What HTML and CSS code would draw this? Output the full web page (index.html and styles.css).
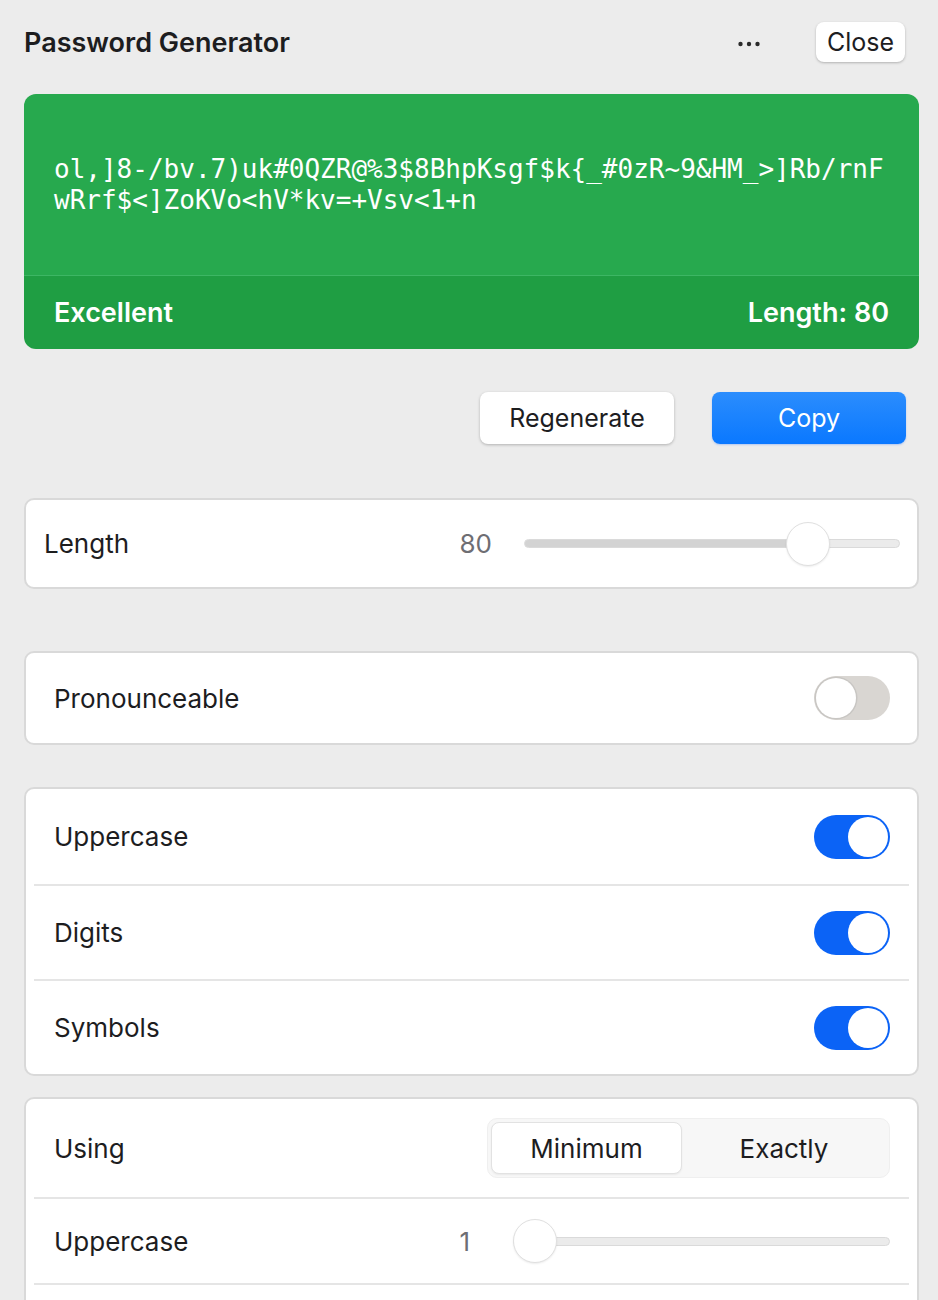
FILE: index.html
```html
<!DOCTYPE html>
<html lang="en">
<head>
<meta charset="utf-8">
<title>Password Generator</title>
<link rel="stylesheet" href="styles.css">
</head>
<body>
<div class="page">
  <header class="topbar">
    <h1 class="title">Password Generator</h1>
    <button class="more" aria-label="More options">
      <svg width="22" height="6" viewBox="0 0 22 6"><circle cx="2.5" cy="3" r="2.2"/><circle cx="11" cy="3" r="2.2"/><circle cx="19.5" cy="3" r="2.2"/></svg>
    </button>
    <button class="btn-close">Close</button>
  </header>

  <section class="result">
    <div class="result-pass">
      <p class="pw">ol,]8-/bv.7)uk#0QZR@%3$8BhpKsgf$k{_#0zR~9&amp;HM_&gt;]Rb/rnFwRrf$&lt;]ZoKVo&lt;hV*kv=+Vsv&lt;1+n</p>
    </div>
    <div class="result-foot">
      <span>Excellent</span>
      <span>Length: 80</span>
    </div>
  </section>

  <div class="actions">
    <button class="btn btn-light">Regenerate</button>
    <button class="btn btn-primary">Copy</button>
  </div>

  <div class="card card-length">
    <span class="label grow">Length</span>
    <span class="value">80</span>
    <div class="slider slider-length" style="--p: 0.79">
      <div class="track"><div class="fill"></div></div>
      <div class="thumb"></div>
    </div>
  </div>

  <div class="card card-single">
    <span class="label grow">Pronounceable</span>
    <span class="toggle"></span>
  </div>

  <div class="card card-list">
    <div class="row">
      <span class="label grow">Uppercase</span>
      <span class="toggle on"></span>
    </div>
    <div class="row">
      <span class="label grow">Digits</span>
      <span class="toggle on"></span>
    </div>
    <div class="row">
      <span class="label grow">Symbols</span>
      <span class="toggle on"></span>
    </div>
  </div>

  <div class="card card-list card-using">
    <div class="row row-using">
      <span class="label grow">Using</span>
      <div class="segmented">
        <span class="seg seg-active">Minimum</span>
        <span class="seg">Exactly</span>
      </div>
    </div>
    <div class="row row-slider">
      <span class="label grow">Uppercase</span>
      <span class="value">1</span>
      <div class="slider slider-count" style="--p: 0">
        <div class="track"><div class="fill"></div></div>
        <div class="thumb"></div>
      </div>
    </div>
    <div class="row row-slider">
      <span class="label grow">Digits</span>
      <span class="value">1</span>
      <div class="slider slider-count" style="--p: 0">
        <div class="track"><div class="fill"></div></div>
        <div class="thumb"></div>
      </div>
    </div>
    <div class="row row-slider">
      <span class="label grow">Symbols</span>
      <span class="value">1</span>
      <div class="slider slider-count" style="--p: 0">
        <div class="track"><div class="fill"></div></div>
        <div class="thumb"></div>
      </div>
    </div>
  </div>
</div>
</body>
</html>
```

FILE: styles.css
```css
* { box-sizing: border-box; }

body {
  margin: 0;
  background: #ececec;
  font-family: Inter, "Noto Sans", sans-serif;
  color: #1d1d1f;
}

button { font-family: inherit; cursor: pointer; }

.page {
  padding: 22px 19px 40px 24px;
}

/* Header */
.topbar {
  display: flex;
  align-items: center;
  height: 40px;
  padding-right: 14px;
}

.title {
  flex: 1;
  margin: 0;
  font-size: 27px;
  font-weight: 600;
  letter-spacing: 0;
  color: #1d1d1f;
}

.more {
  display: flex;
  align-items: center;
  padding: 0;
  margin: 4px 56px 0 0;
  border: 0;
  background: none;
  fill: #2a2a2a;
}

.btn-close {
  width: 89px;
  height: 40px;
  padding: 0;
  border: 0;
  border-radius: 8px;
  background: #fff;
  box-shadow: 0 1px 2.5px rgba(0, 0, 0, 0.25);
  font-size: 25px;
  color: #1d1d1f;
}

/* Generated password */
.result {
  margin-top: 32px;
  border-radius: 12px;
  overflow: hidden;
  color: #fff;
}

.result-pass {
  display: flex;
  align-items: center;
  height: 182px;
  padding: 0 30px;
  background: #27a94e;
  border-bottom: 1px solid #3db664;
}

.pw {
  margin: 0;
  font-family: "DejaVu Sans Mono", "Liberation Mono", monospace;
  font-size: 26px;
  line-height: 31px;
  word-break: break-all;
}

.result-foot {
  display: flex;
  align-items: center;
  justify-content: space-between;
  height: 73px;
  padding: 0 30px;
  background: #1f9e43;
  font-size: 27px;
  font-weight: 600;
}

/* Actions */
.actions {
  display: flex;
  justify-content: flex-end;
  gap: 38px;
  margin-top: 43px;
  padding-right: 13px;
}

.btn {
  width: 194px;
  height: 52px;
  border: 0;
  border-radius: 8px;
  font-size: 25px;
}

.btn-light {
  background: #fff;
  color: #1d1d1f;
  box-shadow: 0 1px 3px rgba(0, 0, 0, 0.25);
}

.btn-primary {
  background: linear-gradient(#2b8dfd, #0a78ff);
  color: #fff;
  box-shadow: 0 1px 2px rgba(0, 90, 255, 0.25);
}

/* Cards */
.card {
  background: #fff;
  border: 2px solid #d9d9d9;
  border-radius: 10px;
}

.label {
  font-size: 26px;
  color: #1d1d1f;
}

.grow { flex: 1; }

.value {
  font-size: 26px;
  color: #6e6e73;
}

.card-length {
  display: flex;
  align-items: center;
  height: 91px;
  margin-top: 54px;
  padding: 0 17px 0 18px;
}

.card-single {
  display: flex;
  align-items: center;
  height: 94px;
  margin-top: 62px;
  padding: 0 27px 0 28px;
}

.card-list {
  margin-top: 42px;
  padding: 0 8px;
}

.card-using {
  margin-top: 21px;
}

.row {
  display: flex;
  align-items: center;
  height: 95px;
  padding: 0 19px 0 20px;
}

.row + .row {
  border-top: 2px solid #e5e5e5;
}

.row-using { height: 98px; }
.row-slider { height: 86px; }

/* Slider */
.slider {
  position: relative;
  height: 44px;
  display: flex;
  align-items: center;
}

.slider-length {
  width: 376px;
  margin-left: 32px;
}

.slider-count {
  width: 377px;
  margin-left: 43px;
}

.track {
  width: 100%;
  height: 9px;
  border-radius: 5px;
  background: #ebebeb;
  border: 1px solid #dadada;
  overflow: hidden;
}

.fill {
  height: 100%;
  width: calc((100% - 44px) * var(--p) + 22px);
  background: #d3d3d3;
}

.thumb {
  position: absolute;
  top: 0;
  left: calc((100% - 44px) * var(--p));
  width: 44px;
  height: 44px;
  border-radius: 50%;
  background: #fff;
  border: 1px solid #e0e0e0;
  box-shadow: 0 1px 2px rgba(0, 0, 0, 0.08);
}

/* Toggle */
.toggle {
  position: relative;
  display: block;
  width: 76px;
  height: 44px;
  border-radius: 22px;
  background: #d9d6d2;
}

.toggle::after {
  content: "";
  position: absolute;
  top: 2px;
  left: 2px;
  width: 40px;
  height: 40px;
  border-radius: 50%;
  background: #fff;
  box-shadow: 0 0 0 1.5px #c8c6c3;
}

.toggle.on {
  background: #0b63f6;
}

.toggle.on::after {
  left: 34px;
  box-shadow: none;
}

/* Segmented control */
.segmented {
  display: flex;
  width: 403px;
  height: 60px;
  padding: 3px;
  border-radius: 10px;
  background: #f7f7f7;
  border: 1px solid #efefef;
}

.seg {
  flex: 1;
  display: flex;
  align-items: center;
  justify-content: center;
  font-size: 26px;
  color: #1d1d1f;
  border-radius: 8px;
}

.seg-active {
  flex: 0 0 191px;
  background: #fff;
  border: 1px solid #e2e2e2;
  box-shadow: 0 1px 2px rgba(0, 0, 0, 0.06);
}
```
